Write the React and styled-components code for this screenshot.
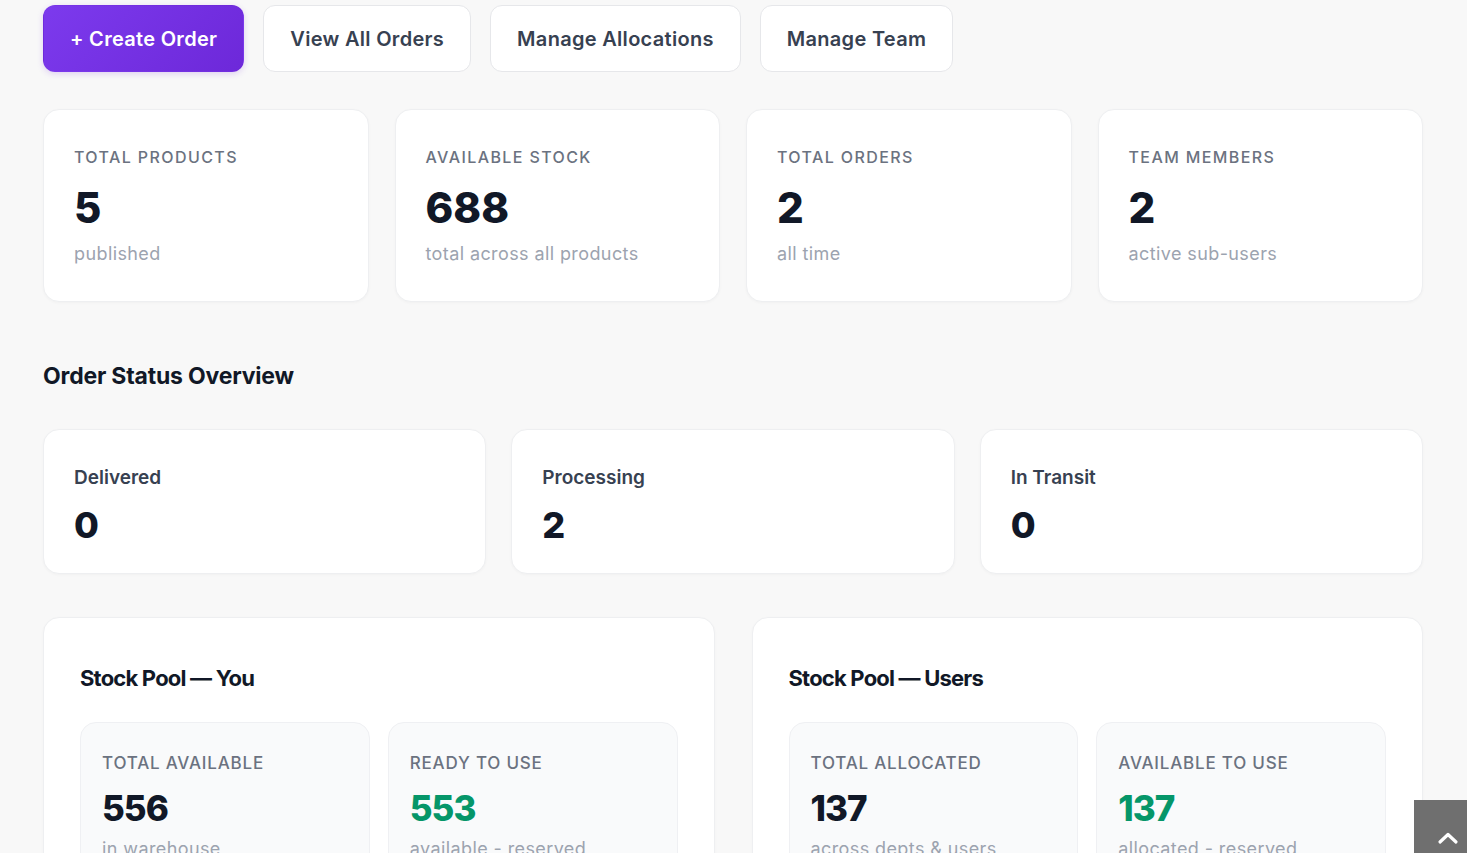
import React from "react";
import styled, { createGlobalStyle } from "styled-components";

const Global = createGlobalStyle`
  html, body { margin: 0; padding: 0; background: #f8f8f8; }
  body { font-family: Inter, "Noto Sans", "Liberation Sans", sans-serif; color: #111827; }
  * { box-sizing: border-box; }
`;

const Page = styled.div`
  padding: 5px 44px 60px 43px;
  display: flex;
  flex-direction: column;
`;

const Toolbar = styled.div`
  display: flex;
  gap: 19px;
  align-items: center;
`;

const Button = styled.button`
  height: 67px;
  padding: 0 26px;
  border-radius: 12px;
  font-family: inherit;
  font-size: 20px;
  font-weight: 600;
  letter-spacing: 0.3px;
  cursor: pointer;
  border: 1px solid ${(p) => (p.$primary ? "transparent" : "#e6e7ea")};
  background: ${(p) => (p.$primary ? "linear-gradient(135deg, #7c3aed 0%, #6d28d9 100%)" : "#ffffff")};
  color: ${(p) => (p.$primary ? "#ffffff" : "#374151")};
  box-shadow: ${(p) => (p.$primary ? "0 2px 6px rgba(109,40,217,0.18)" : "none")};
`;

const StatGrid = styled.div`
  display: grid;
  grid-template-columns: repeat(4, 1fr);
  gap: 26px;
  margin-top: 37px;
`;

const Card = styled.div`
  background: #fff;
  border: 1px solid #eeeff1;
  border-radius: 16px;
  box-shadow: 0 1px 3px rgba(0, 0, 0, 0.03);
`;

const StatCard = styled(Card)`
  height: 193px;
  padding: 35px 30px 0;
  display: flex;
  flex-direction: column;
`;

const Label = styled.div`
  font-size: 16px;
  font-weight: 500;
  letter-spacing: 1.4px;
  text-transform: uppercase;
  color: #6b7280;
  line-height: 24px;
`;

const BigNumber = styled.div`
  font-size: 42px;
  font-weight: 800;
  line-height: 48px;
  margin-top: 15px;
  color: #111827;
`;

const Sub = styled.div`
  font-size: 18px;
  letter-spacing: 0.4px;
  color: #9ca3af;
  line-height: 24px;
  margin-top: 10px;
`;

const SectionTitle = styled.h2`
  margin: 60px 0 0;
  font-size: 23px;
  font-weight: 700;
  letter-spacing: -0.2px;
  color: #111827;
  line-height: 28px;
`;

const StatusGrid = styled.div`
  display: grid;
  grid-template-columns: repeat(3, 1fr);
  gap: 25px;
  margin-top: 39px;
`;

const StatusCard = styled(Card)`
  height: 145px;
  padding: 35px 30px 0;
`;

const StatusLabel = styled.div`
  font-size: 19px;
  font-weight: 600;
  color: #374151;
  line-height: 26px;
`;

const StatusNumber = styled.div`
  font-size: 36px;
  font-weight: 800;
  line-height: 44px;
  margin-top: 12px;
  color: #111827;
`;

const PoolGrid = styled.div`
  display: grid;
  grid-template-columns: 1fr 1fr;
  gap: 37px;
  margin-top: 43px;
`;

const Panel = styled(Card)`
  padding: 45px 36px 36px;
`;

const PanelTitle = styled.h3`
  margin: 0;
  font-size: 22px;
  font-weight: 700;
  letter-spacing: -0.8px;
  line-height: 30px;
  color: #111827;
`;

const InnerGrid = styled.div`
  display: grid;
  grid-template-columns: 1fr 1fr;
  gap: 18px;
  margin-top: 29px;
`;

const InnerCard = styled.div`
  background: #f9fafb;
  border: 1px solid #eff0f3;
  border-radius: 16px;
  padding: 28px 21px 30px;
`;

const InnerLabel = styled(Label)`
  font-size: 17px;
  letter-spacing: 0.8px;
`;

const InnerNumber = styled.div`
  font-size: 35px;
  font-weight: 800;
  line-height: 44px;
  margin-top: 11px;
  letter-spacing: -1px;
  color: ${(p) => p.$color || "#111827"};
`;

const InnerSub = styled(Sub)`
  margin-top: 7px;
`;

const ScrollTop = styled.button`
  position: fixed;
  right: 0;
  bottom: 0;
  width: 53px;
  height: 53px;
  border: none;
  background: #6f6f6f;
  display: flex;
  align-items: flex-end;
  justify-content: center;
  padding: 0 0 8px 14px;
  cursor: pointer;
`;

const stats = [
  { label: "Total Products", value: "5", sub: "published" },
  { label: "Available Stock", value: "688", sub: "total across all products" },
  { label: "Total Orders", value: "2", sub: "all time" },
  { label: "Team Members", value: "2", sub: "active sub-users" },
];

const statuses = [
  { label: "Delivered", value: "0" },
  { label: "Processing", value: "2" },
  { label: "In Transit", value: "0" },
];

const pools = [
  {
    title: "Stock Pool — You",
    items: [
      { label: "Total Available", value: "556", sub: "in warehouse" },
      { label: "Ready to Use", value: "553", sub: "available - reserved", green: true },
    ],
  },
  {
    title: "Stock Pool — Users",
    items: [
      { label: "Total Allocated", value: "137", sub: "across depts & users" },
      { label: "Available to Use", value: "137", sub: "allocated - reserved", green: true },
    ],
  },
];

export default function App() {
  return (
    <>
      <Global />
      <Page>
        <Toolbar>
          <Button $primary>+ Create Order</Button>
          <Button>View All Orders</Button>
          <Button>Manage Allocations</Button>
          <Button>Manage Team</Button>
        </Toolbar>

        <StatGrid>
          {stats.map((s) => (
            <StatCard key={s.label}>
              <Label>{s.label}</Label>
              <BigNumber>{s.value}</BigNumber>
              <Sub>{s.sub}</Sub>
            </StatCard>
          ))}
        </StatGrid>

        <SectionTitle>Order Status Overview</SectionTitle>

        <StatusGrid>
          {statuses.map((s) => (
            <StatusCard key={s.label}>
              <StatusLabel>{s.label}</StatusLabel>
              <StatusNumber>{s.value}</StatusNumber>
            </StatusCard>
          ))}
        </StatusGrid>

        <PoolGrid>
          {pools.map((p) => (
            <Panel key={p.title}>
              <PanelTitle>{p.title}</PanelTitle>
              <InnerGrid>
                {p.items.map((it) => (
                  <InnerCard key={it.label}>
                    <InnerLabel>{it.label}</InnerLabel>
                    <InnerNumber $color={it.green ? "#059669" : undefined}>{it.value}</InnerNumber>
                    <InnerSub>{it.sub}</InnerSub>
                  </InnerCard>
                ))}
              </InnerGrid>
            </Panel>
          ))}
        </PoolGrid>
      </Page>
      <ScrollTop aria-label="Scroll to top">
        <svg width="22" height="14" viewBox="0 0 22 14" fill="none">
          <path d="M3 11 L11 3.5 L19 11" stroke="#fff" strokeWidth="3.2" strokeLinecap="round" strokeLinejoin="round" />
        </svg>
      </ScrollTop>
    </>
  );
}
